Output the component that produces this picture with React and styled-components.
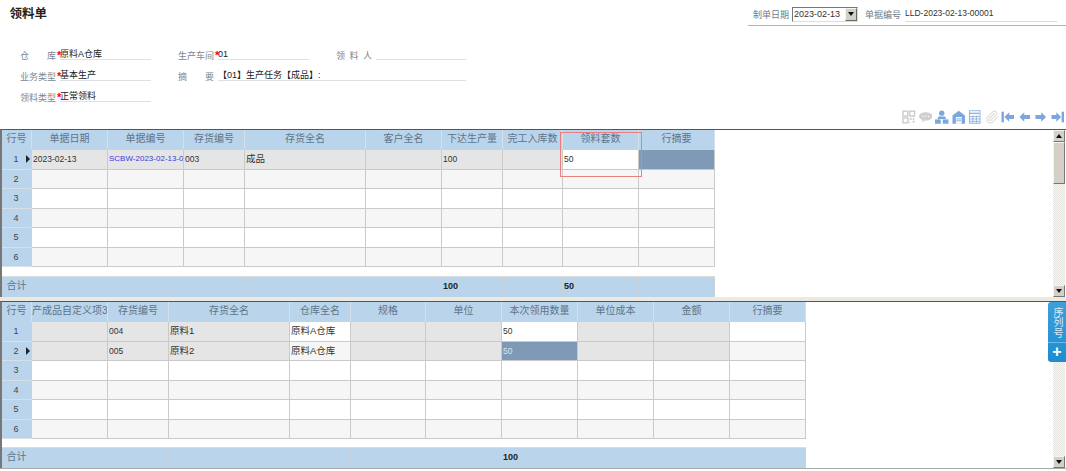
import styled, { createGlobalStyle } from "styled-components";
import { Paperclip } from "lucide-react";

const upperColumns = [30, 76, 76, 61, 121, 76, 61, 60, 76, 76];
const upperHeads = ["行号", "单据日期", "单据编号", "存货编号", "存货全名", "客户全名", "下达生产量", "完工入库数", "领料套数", "行摘要"];
const upperFirst = [
  { text: "2023-02-13", tone: "locked" },
  { text: "SCBW-2023-02-13-00001", tone: "locked", link: true },
  { text: "003", tone: "locked" },
  { text: "成品", tone: "locked" },
  { text: "", tone: "locked" },
  { text: "100", tone: "locked" },
  { text: "", tone: "locked" },
  { text: "50", tone: "open" },
  { text: "", tone: "selected" },
];
const upperTotals = ["", "", "", "", "", "100", "", "50", ""];

const lowerColumns = [30, 76, 61, 121, 61, 75, 76, 76, 76, 76, 76];
const lowerHeads = ["行号", "产成品自定义项3", "存货编号", "存货全名", "仓库全名", "规格", "单位", "本次领用数量", "单位成本", "金额", "行摘要"];
const lowerRows = [
  [
    { text: "", tone: "locked" },
    { text: "004", tone: "locked" },
    { text: "原料1", tone: "locked" },
    { text: "原料A仓库", tone: "open" },
    { text: "", tone: "locked" },
    { text: "", tone: "locked" },
    { text: "50", tone: "open" },
    { text: "", tone: "locked" },
    { text: "", tone: "locked" },
    { text: "", tone: "open" },
  ],
  [
    { text: "", tone: "locked" },
    { text: "005", tone: "locked" },
    { text: "原料2", tone: "locked" },
    { text: "原料A仓库", tone: "alt" },
    { text: "", tone: "locked" },
    { text: "", tone: "locked" },
    { text: "50", tone: "selected" },
    { text: "", tone: "locked" },
    { text: "", tone: "locked" },
    { text: "", tone: "alt" },
  ],
];
const lowerTotals = ["", "", "", "", "", "", "100", "", "", ""];

function emptyRow(size, index) {
  return Array.from({ length: size }, () => ({ text: "", tone: index % 2 ? "alt" : "open" }));
}

function DataGrid({ columns, heads, rows, totals, current, gap }) {
  const size = columns.length - 1;
  const body = Array.from({ length: 6 }, (_, i) => rows[i] || emptyRow(size, i));
  return (
    <Grid $columns={columns} $gap={gap}>
      {heads.map((head) => (
        <HeadCell key={head}>{head}</HeadCell>
      ))}
      {body.map((row, i) => [
        <RowHead key={`head-${i}`} $current={i === current}>
          {i + 1}
        </RowHead>,
        ...row.map((cell, j) => (
          <Cell key={`${i}-${j}`} $tone={cell.tone} $link={cell.link} $han={/[\u4e00-\u9fff]/.test(cell.text)}>
            {cell.text}
          </Cell>
        )),
      ])}
      <Spacer />
      <TotalHead>合计</TotalHead>
      {totals.map((value, i) => (
        <TotalCell key={i}>{value}</TotalCell>
      ))}
    </Grid>
  );
}

function ScrollBar({ thumb }) {
  return (
    <Scroll>
      <ScrollButton>
        <UpArrow />
      </ScrollButton>
      {thumb && <ScrollThumb />}
      <ScrollTrack />
      <ScrollButton>
        <DownArrow />
      </ScrollButton>
    </Scroll>
  );
}

function Field({ label, required, value, wide }) {
  return (
    <FieldBox $wide={wide}>
      <FieldLabel>{label}</FieldLabel>
      <Star>{required ? "*" : ""}</Star>
      <FieldValue>{value}</FieldValue>
    </FieldBox>
  );
}

function ToolIcons() {
  const grey = "#cfcfcf";
  const blue = "#7da7dc";
  return (
    <Toolbar>
      <ToolSvg viewBox="0 0 14 14" fill="none" stroke={grey} strokeWidth="1.6">
        <rect x="1" y="1" width="5" height="5" />
        <rect x="8" y="1" width="5" height="5" />
        <rect x="1" y="8" width="5" height="5" />
        <path d="M8 8h2v2H8zM11 11h2v2h-2z" fill={grey} stroke="none" />
        <path d="M12 8v2M8 12v1" />
      </ToolSvg>
      <ToolSvg viewBox="0 1.500 14 11">
        <path d="M7 2c3.800 0 7 1.900 7 4.300s-3.200 4.300-7 4.300H6l-2.800 2 .6-2.500C1.500 9.400 0 8 0 6.300 0 3.900 3.200 2 7 2z" fill={grey} />
        <path d="M3.500 6.300h1.200M6.400 6.300h1.200M9.300 6.300h1.200" stroke="#fff" strokeWidth="1.300" />
      </ToolSvg>
      <ToolSvg viewBox="0 0 14 14" fill={blue}>
        <circle cx="7" cy="3" r="2.800" />
        <path d="M3.500 6.500h7l1 2.500H2.500z" />
        <rect x="0" y="9.500" width="6" height="4.500" />
        <rect x="8" y="9.500" width="6" height="4.500" />
      </ToolSvg>
      <ToolSvg viewBox="0 0 14 14">
        <path d="M7 .5l6.500 5V14H.5V5.500z" fill={blue} />
        <path d="M4 7h6v7H4z" fill="#fff" />
        <path d="M4.500 9h5M4.500 11h5" stroke={blue} />
      </ToolSvg>
      <ToolSvg viewBox="0 0 14 14" fill="none" stroke="#94b5e0">
        <rect x="1.500" y="0.500" width="11" height="13" />
        <path d="M2 2.500h10v1.500H2z" fill="#94b5e0" stroke="none" />
        <path d="M1.500 6.500h11M1.500 9h11M1.500 11.500h11M5 5.500v8M8.700 5.500v8" />
      </ToolSvg>
      <ClipIcon>
        <Paperclip size={14} strokeWidth={2} />
      </ClipIcon>
      <ToolSvg viewBox="0 0 14 14" fill={blue}>
        <rect x="0.500" y="1.500" width="2.500" height="11" />
        <path d="M3.500 7l5-5v3h5v4h-5v3z" />
      </ToolSvg>
      <ToolSvg viewBox="0 0 14 14" fill={blue}>
        <path d="M1.500 7l5-5v3h6v4h-6v3z" />
      </ToolSvg>
      <ToolSvg viewBox="0 0 14 14" fill={blue}>
        <path d="M12.500 7l-5-5v3h-6v4h6v3z" />
      </ToolSvg>
      <ToolSvg viewBox="0 0 14 14" fill={blue}>
        <rect x="11" y="1.500" width="2.500" height="11" />
        <path d="M10.500 7l-5-5v3h-5v4h5v3z" />
      </ToolSvg>
    </Toolbar>
  );
}

export default function App() {
  return (
    <Page>
      <GlobalStyle />
      <TopBar>
        <Title>领料单</Title>
        <DocInfo>
          <InfoLabel>制单日期</InfoLabel>
          <DateBox>
            2023-02-13
            <DateButton>
              <DownArrow />
            </DateButton>
          </DateBox>
          <InfoLabel>单据编号</InfoLabel>
          <DocNumber>LLD-2023-02-13-00001</DocNumber>
        </DocInfo>
      </TopBar>

      <Form>
        <Field label="仓库" required value="原料A仓库" />
        <Field label="生产车间" required value="01" />
        <Field label="领料人" value="" />
        <Field label="业务类型" required value="基本生产" />
        <Field label="摘要" value="【01】生产任务【成品】:" wide />
        <Field label="领料类型" required value="正常领料" />
      </Form>

      <ToolIcons />

      <Panel>
        <GridArea>
          <DataGrid
            columns={upperColumns}
            heads={upperHeads}
            rows={[upperFirst]}
            totals={upperTotals}
            current={0}
            gap={10}
          />
          <EditMark />
        </GridArea>
        <ScrollBar thumb />
      </Panel>

      <Sash />

      <LowerPanel>
        <GridArea>
          <DataGrid
            columns={lowerColumns}
            heads={lowerHeads}
            rows={lowerRows}
            totals={lowerTotals}
            current={1}
            gap={9}
          />
        </GridArea>
        <ScrollBar />
        <SideTab>
          <SideText>序列号</SideText>
          <SidePlus>+</SidePlus>
        </SideTab>
      </LowerPanel>
      <BottomLine />
    </Page>
  );
}

const cjk = `"Liberation Sans", "Noto Sans CJK SC", sans-serif`;

const GlobalStyle = createGlobalStyle`
  html, body {
    margin: 0;
    height: 100%;
    overflow: hidden;
    background: #fff;
  }
`;

const Page = styled.div`
  width: 1066px;
  height: 471px;
  font-family: ${cjk};
  color: #222;
  background: #fff;
`;

const TopBar = styled.header`
  display: flex;
  justify-content: space-between;
  height: 26px;
`;

const Title = styled.h1`
  margin: 6px 0 0 9.500px;
  font-size: 12.500px;
  line-height: 16px;
  font-weight: 700;
  color: #222;
`;

const DocInfo = styled.div`
  display: flex;
  align-items: center;
  box-sizing: border-box;
  width: 318px;
  height: 26px;
  padding: 5px 9px 2px 5px;
  border-bottom: 1px solid #b4b4b4;
`;

const InfoLabel = styled.span`
  flex: none;
  width: 36px;
  font-size: 9px;
  color: #6b7a88;
  white-space: nowrap;
`;

const DateBox = styled.div`
  position: relative;
  box-sizing: border-box;
  flex: none;
  width: 66px;
  height: 15px;
  margin: 0 7px 0 3px;
  padding-left: 1px;
  border: 1px solid #777;
  border-right-color: #ddd;
  border-bottom-color: #ddd;
  font-size: 9px;
  line-height: 13px;
  color: #333;
`;

const DateButton = styled.span`
  position: absolute;
  top: 0;
  right: 0;
  display: flex;
  align-items: center;
  justify-content: center;
  box-sizing: border-box;
  width: 12px;
  height: 13px;
  background: #d4d0c8;
  border: 1px solid;
  border-color: #f4f4f0 #666 #666 #f4f4f0;
`;

const DocNumber = styled.div`
  flex: 1;
  margin-left: 4px;
  height: 14px;
  font-size: 8.500px;
  line-height: 13px;
  color: #333;
  border-bottom: 1px solid #d8dde2;
`;

const Form = styled.section`
  display: grid;
  grid-template-columns: 131px 131px 130px;
  column-gap: 27px;
  row-gap: 5px;
  grid-auto-rows: 16px;
  margin: 18px 0 0 20px;
`;

const FieldBox = styled.div`
  display: flex;
  align-items: flex-end;
  grid-column: ${(p) => (p.$wide ? "2 / 4" : "auto")};
  ${(p) => p.$wide && "grid-row: 2;"}
`;

const FieldLabel = styled.span`
  flex: none;
  width: 36px;
  margin-bottom: -1px;
  font-size: 9px;
  line-height: 10px;
  text-align: justify;
  text-align-last: justify;
  color: #7a8794;
`;

const Star = styled.span`
  flex: none;
  width: 4px;
  margin-left: 1px;
  margin-right: -1px;
  height: 14px;
  font-size: 11px;
  font-weight: 700;
  line-height: 19px;
  color: #f00;
`;

const FieldValue = styled.span`
  flex: 1;
  height: 11px;
  font-size: 9px;
  line-height: 12px;
  color: #222;
  white-space: nowrap;
  border-bottom: 1px solid #dde0e4;
`;

const Toolbar = styled.div`
  display: flex;
  justify-content: flex-end;
  gap: 3px;
  height: 14px;
  margin-top: 8px;
  padding: 0 2px 0 0;
  margin-bottom: 5px;
`;

const ToolSvg = styled.svg`
  flex: none;
  width: 13.500px;
  height: 14px;
`;

const ClipIcon = styled.span`
  flex: none;
  width: 13.500px;
  height: 14px;
  color: #dedede;
  svg {
    display: block;
  }
`;

const Panel = styled.section`
  position: relative;
  display: flex;
  justify-content: space-between;
  box-sizing: border-box;
  height: 168px;
  padding-right: 1px;
  border-top: 1px solid #555;
  border-left: 2px solid #777;
`;

const LowerPanel = styled(Panel)`
  height: 167px;
`;

const GridArea = styled.div`
  position: relative;
  flex: 1;
  min-width: 0;
`;

const Grid = styled.div`
  display: grid;
  grid-template-columns: ${(p) => p.$columns.map((c) => `${c}px`).join(" ")};
  grid-template-rows: 20px repeat(6, 19.500px) ${(p) => p.$gap}px 20px;
  width: max-content;
`;

const BaseCell = styled.div`
  box-sizing: border-box;
  overflow: hidden;
  white-space: nowrap;
  border-right: 1px solid #cacaca;
  border-bottom: 1px solid #cacaca;
`;

const HeadCell = styled(BaseCell)`
  font-size: 10px;
  line-height: 18px;
  text-align: center;
  color: #5d7488;
  background: #bad5eb;
  border-right-color: #d6e0e8;
  border-bottom-color: #c8d2da;
`;

const RowHead = styled(BaseCell)`
  position: relative;
  font-size: 9px;
  line-height: 18px;
  padding-right: 1px;
  text-align: center;
  color: #444;
  background: #bad5eb;
  border-right-color: #c8d2da;
  border-bottom-color: #d6e0e8;

  ${(p) =>
    p.$current &&
    `
    &::after {
      content: "";
      position: absolute;
      top: 5px;
      right: 1px;
      border-left: 4px solid #222;
      border-top: 4px solid transparent;
      border-bottom: 4px solid transparent;
    }
  `}
`;

const toneColors = {
  locked: "#e5e5e5",
  open: "#fff",
  alt: "#f6f6f6",
  selected: "#7e9ab6",
};

const Cell = styled(BaseCell)`
  padding-left: 1px;
  font-size: ${(p) => (p.$han ? "9.500px" : p.$link ? "8px" : "8.500px")};
  line-height: 18px;
  color: ${(p) => (p.$link ? "#3a3ae0" : p.$tone === "selected" ? "#dbe4ec" : "#333")};
  background: ${(p) => toneColors[p.$tone]};
`;

const Spacer = styled.div`
  grid-column: 1 / -1;
  border-bottom: 1px solid #dcdcdc;
`;

const TotalHead = styled(HeadCell)`
  border-right-color: #c8d2da;
  border-bottom: none;
`;

const TotalCell = styled(BaseCell)`
  padding-left: 1px;
  font-size: 9px;
  line-height: 18px;
  font-weight: 700;
  color: #222;
  background: #bad5eb;
  border-right-color: #c8d2da;
  border-bottom: none;
`;

const EditMark = styled.div`
  position: absolute;
  top: 2px;
  left: 558px;
  box-sizing: border-box;
  width: 82px;
  height: 45px;
  border: 1px solid #ea7f7f;
  pointer-events: none;
`;

const Scroll = styled.div`
  display: flex;
  flex: none;
  flex-direction: column;
  width: 12px;
`;

const ScrollButton = styled.div`
  display: flex;
  flex: none;
  align-items: center;
  justify-content: center;
  box-sizing: border-box;
  height: 12px;
  background: #d4d0c8;
  border: 1px solid;
  border-color: #f4f4f0 #777 #777 #f4f4f0;
`;

const ScrollThumb = styled.div`
  flex: none;
  box-sizing: border-box;
  height: 42px;
  background: #d4d0c8;
  border: 1px solid;
  border-color: #f4f4f0 #777 #777 #f4f4f0;
`;

const ScrollTrack = styled.div`
  flex: 1;
  background: repeating-conic-gradient(#e4e2dc 0 25%, #f8f8f6 0 50%) 0 0 / 2px 2px;
`;

const UpArrow = styled.span`
  border-left: 3.500px solid transparent;
  border-right: 3.500px solid transparent;
  border-bottom: 4px solid #111;
`;

const DownArrow = styled.span`
  border-left: 3.500px solid transparent;
  border-right: 3.500px solid transparent;
  border-top: 4px solid #111;
`;

const Sash = styled.div`
  height: 4px;
  background: #ece9e0;
`;

const SideTab = styled.aside`
  position: absolute;
  top: 0;
  right: 0;
  display: flex;
  flex-direction: column;
  align-items: center;
  width: 18px;
  height: 60px;
  border-radius: 3px 0 0 3px;
  color: #d8ecf8;
  background: linear-gradient(180deg, #3f9fd8 0%, #1d8dd2 100%);
`;

const SideText = styled.div`
  box-sizing: border-box;
  flex: none;
  width: 18px;
  height: 41px;
  padding-top: 5px;
  font-size: 10px;
  line-height: 18px;
  letter-spacing: 0.500px;
  text-orientation: upright;
  writing-mode: vertical-rl;
  border-bottom: 1px solid #6db8e4;
`;

const SidePlus = styled.div`
  font-size: 16px;
  line-height: 18px;
  font-weight: 700;
  color: #fff;
`;

const BottomLine = styled.div`
  height: 1px;
  background: #aaa;
`;
